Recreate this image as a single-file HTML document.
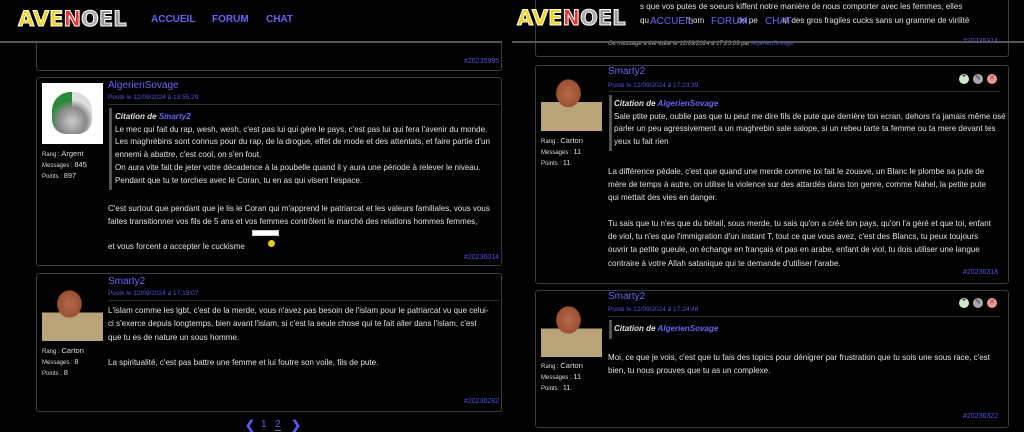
<!DOCTYPE html>
<html><head><meta charset="utf-8"><style>
*{margin:0;padding:0;box-sizing:border-box}
body{width:1024px;height:432px;background:#000;position:relative;overflow:hidden;font-family:"Liberation Sans",sans-serif;color:#e2e2e2}
.a{position:absolute;white-space:nowrap}
.card{position:absolute;border:1px solid #3c3c3c;border-radius:3px}
.t{font-size:8.05px;letter-spacing:0}
.nm{font-size:10px;color:#6466f0}
.dt{font-size:6.5px;color:#5255dd}
.hr{position:absolute;height:1px;background:#2c2c2c}
.qb{position:absolute;width:3px;background:#555}
.id{font-size:7px;color:#5255dd}
.r{font-size:6px;color:#ddd}.r b{font-weight:normal;font-size:7.5px}
.logo{font-weight:900;font-size:21px;letter-spacing:0;-webkit-text-stroke:1px #fff;font-family:"DejaVu Sans",sans-serif}
.nav{font-size:10px;color:#6466f0;font-weight:bold}
.face{position:absolute;background:radial-gradient(ellipse at 45% 35%,#b86a4a 0,#9a5035 25%,transparent 27%),linear-gradient(#000 50%,#b8a478 50%)}
.ic{position:absolute;width:10px;height:10px;border-radius:50%;font-size:7px;text-align:center;line-height:10px;color:#333}
</style></head><body>
<!-- LEFT PANE -->
<div class="card" style="left:36px;top:20px;width:466px;height:51px"></div>
<div class="a id" style="left:464px;top:58px">#20235995</div>
<div class="a" style="left:0;top:0;width:502px;height:42px;background:#000"></div>
<div class="a logo" style="left:18px;top:7px"><span style="color:#f2d21a">AVE</span><span style="color:#e33">N</span><span style="color:#aaa">O</span><span style="color:#999">EL</span></div>
<div class="a nav" style="left:151px;top:14px">ACCUEIL</div>
<div class="a nav" style="left:212px;top:14px">FORUM</div>
<div class="a nav" style="left:266px;top:14px">CHAT</div>
<div class="a" style="left:0;top:41px;width:502px;height:2px;background:#555"></div>

<div class="card" style="left:36px;top:77px;width:466px;height:189px"></div>
<div class="a" style="left:42px;top:83px;width:61px;height:61px;background:#fff"></div>
<div class="a" style="left:52px;top:92px;width:40px;height:42px;border-radius:45% 45% 35% 35%;background:radial-gradient(circle at 50% 70%,#ccc 0,#888 40%,transparent 60%),linear-gradient(90deg,#2a8a3a 50%,#ddd 50%)"></div>
<div class="a r" style="left:42px;top:149px">Rang : <b>Argent</b></div>
<div class="a r" style="left:42px;top:160px">Messages : <b>845</b></div>
<div class="a r" style="left:42px;top:171px">Points : <b>897</b></div>
<div class="a nm" style="left:108px;top:80px">AlgerienSovage</div>
<div class="a dt" style="left:108px;top:94px">Posté le 12/09/2024 à 13:55:29</div>
<div class="hr" style="left:108px;top:104px;width:392px"></div>
<div class="qb" style="left:109px;top:108px;height:82px"></div>
<div class="a t" style="left:115px;top:111px;line-height:12.7px">
<i><b>Citation de <span style="color:#6466f0">Smarty2</span></b></i><br>
Le mec qui fait du rap, wesh, wesh, c'est pas lui qui gère le pays, c'est pas lui qui fera l'avenir du monde.<br>
Les maghrébins sont connus pour du rap, de la drogue, effet de mode et des attentats, et faire partie d'un<br>
ennemi à abattre, c'est cool, on s'en fout.<br>
On aura vite fait de jeter votre décadence à la poubelle quand il y aura une période à relever le niveau.<br>
Pendant que tu te torches avec le Coran, tu en as qui visent l'espace.</div>
<div class="a t" style="left:108px;top:202px;line-height:13.4px">C'est surtout que pendant que je lis le Coran qui m'apprend le patriarcat et les valeurs familiales, vous vous<br>faites transitionner vos fils de 5 ans et vos femmes contrôlent le marché des relations hommes femmes,</div>
<div class="a t" style="left:108px;top:242px">et vous forcent a accepter le cuckisme</div>
<div class="a" style="left:252px;top:230px;width:27px;height:6px;border:1px solid #ccc;background:#fff"></div>
<div class="a" style="left:268px;top:240px;width:7px;height:7px;border-radius:50%;background:#f3c814"></div>
<div class="a id" style="left:464px;top:254px">#20236014</div>

<div class="card" style="left:36px;top:273px;width:466px;height:139px"></div>
<div class="face" style="left:42px;top:284px;width:61px;height:57px"></div>
<div class="a r" style="left:42px;top:346px">Rang : <b>Carton</b></div>
<div class="a r" style="left:42px;top:357px">Messages : <b>8</b></div>
<div class="a r" style="left:42px;top:368px">Points : <b>8</b></div>
<div class="a nm" style="left:108px;top:276px">Smarty2</div>
<div class="a dt" style="left:108px;top:290px">Posté le 12/09/2024 à 17:15:07</div>
<div class="hr" style="left:108px;top:300px;width:392px"></div>
<div class="a t" style="left:108px;top:304px;line-height:13.3px">L'islam comme les lgbt, c'est de la merde, vous n'avez pas besoin de l'islam pour le patriarcat vu que celui-<br>ci s'exerce depuis longtemps, bien avant l'islam, si c'est la seule chose qui te fait aller dans l'islam, c'est<br>que tu es de nature un sous homme.</div>
<div class="a t" style="left:108px;top:358px">La spiritualité, c'est pas battre une femme et lui foutre son voile, fils de pute.</div>
<div class="a id" style="left:464px;top:398px">#20236282</div>
<div class="a" style="left:245px;top:418px;font-size:12px;color:#5a5cf0;font-weight:bold">❮</div>
<div class="a" style="left:261px;top:419px;font-size:10px;color:#5a5cf0">1</div>
<div class="a" style="left:275px;top:419px;font-size:10px;color:#5a5cf0;border-bottom:1px solid #777">2</div>
<div class="a" style="left:291px;top:418px;font-size:12px;color:#5a5cf0;font-weight:bold">❯</div>

<!-- RIGHT PANE -->
<div class="card" style="left:535px;top:-10px;width:474px;height:67px"></div>
<div class="a t" style="left:640px;top:2px">s que vos putes de soeurs kiffent notre manière de nous comporter avec les femmes, elles</div>
<div class="a t" style="left:640px;top:16px">qu&nbsp;&nbsp;&nbsp;&nbsp;&nbsp;&nbsp;&nbsp;&nbsp;&nbsp;&nbsp;&nbsp;&nbsp;&nbsp;&nbsp;&nbsp;&nbsp;&nbsp;'hom&nbsp;&nbsp;&nbsp;&nbsp;&nbsp;&nbsp;&nbsp;&nbsp;&nbsp;&nbsp;&nbsp;&nbsp;&nbsp;&nbsp;&nbsp;on pe&nbsp;&nbsp;&nbsp;&nbsp;&nbsp;&nbsp;&nbsp;&nbsp;&nbsp;&nbsp;&nbsp;nt des gros fragiles cucks sans un gramme de virilité</div>
<div class="a" style="left:608px;top:41px;font-size:6px;font-style:italic;color:#bbb">Ce message a été édité le 12/09/2024 à 17:23:09 par <span style="color:#5255dd">AlgerienSovage</span></div>
<div class="a id" style="left:963px;top:38px">#20236314</div>
<div class="a logo" style="left:517px;top:6px"><span style="color:#f2d21a">AVE</span><span style="color:#e33">N</span><span style="color:#aaa">O</span><span style="color:#999">EL</span></div>
<div class="a nav" style="left:650px;top:16px;font-weight:normal">ACCUEIL</div>
<div class="a nav" style="left:711px;top:16px;font-weight:normal">FORUM</div>
<div class="a nav" style="left:765px;top:16px;font-weight:normal">CHAT</div>
<div class="a" style="left:512px;top:41px;width:512px;height:2px;background:#555"></div>

<div class="card" style="left:535px;top:65px;width:474px;height:219px"></div>
<div class="face" style="left:541px;top:73px;width:61px;height:58px"></div>
<div class="a r" style="left:541px;top:136px">Rang : <b>Carton</b></div>
<div class="a r" style="left:541px;top:147px">Messages : <b>11</b></div>
<div class="a r" style="left:541px;top:158px">Points : <b>11</b></div>
<div class="a nm" style="left:608px;top:66px">Smarty2</div>
<div class="a dt" style="left:608px;top:82px">Posté le 12/09/2024 à 17:23:39</div>
<div class="ic" style="left:959px;top:74px;background:#cfe9cf">❞</div>
<div class="ic" style="left:973px;top:74px;background:#aaa">✎</div>
<div class="ic" style="left:987px;top:74px;background:#e99;color:#a33">✕</div>
<div class="hr" style="left:608px;top:91px;width:392px"></div>
<div class="qb" style="left:609px;top:95px;height:56px"></div>
<div class="a t" style="left:614px;top:98px;line-height:12.7px">
<i><b>Citation de <span style="color:#6466f0">AlgerienSovage</span></b></i><br>
Sale ptite pute, oublie pas que tu peut me dire fils de pute que derrière ton ecran, dehors t'a jamais même osé<br>
parler un peu agressivement a un maghrebin sale salope, si un rebeu tarte ta femme ou ta mere devant tes<br>
yeux tu fait rien</div>
<div class="a t" style="left:608px;top:165px;line-height:13.2px">La différence pédale, c'est que quand une merde comme toi fait le zouave, un Blanc le plombe sa pute de<br>mère de temps à autre, on utilise la violence sur des attardés dans ton genre, comme Nahel, la petite pute<br>qui mettait des vies en danger.</div>
<div class="a t" style="left:608px;top:217px;line-height:13.2px">Tu sais que tu n'es que du bétail, sous merde, tu sais qu'on a créé ton pays, qu'on l'a géré et que toi, enfant<br>de viol, tu n'es que l'immigration d'un instant T, tout ce que vous avez, c'est des Blancs, tu peux toujours<br>ouvrir ta petite gueule, on échange en français et pas en arabe, enfant de viol, tu dois utiliser une langue<br>contraire à votre Allah satanique qui te demande d'utiliser l'arabe.</div>
<div class="a id" style="left:963px;top:269px">#20236318</div>

<div class="card" style="left:535px;top:290px;width:474px;height:138px"></div>
<div class="face" style="left:541px;top:300px;width:61px;height:57px"></div>
<div class="a r" style="left:541px;top:361px">Rang : <b>Carton</b></div>
<div class="a r" style="left:541px;top:372px">Messages : <b>11</b></div>
<div class="a r" style="left:541px;top:383px">Points : <b>11</b></div>
<div class="a nm" style="left:608px;top:291px">Smarty2</div>
<div class="a dt" style="left:608px;top:306px">Posté le 12/09/2024 à 17:24:48</div>
<div class="ic" style="left:959px;top:298px;background:#cfe9cf">❞</div>
<div class="ic" style="left:973px;top:298px;background:#aaa">✎</div>
<div class="ic" style="left:987px;top:298px;background:#e99;color:#a33">✕</div>
<div class="hr" style="left:608px;top:316px;width:392px"></div>
<div class="qb" style="left:609px;top:320px;height:19px"></div>
<div class="a t" style="left:614px;top:324px"><i><b>Citation de <span style="color:#6466f0">AlgerienSovage</span></b></i></div>
<div class="a t" style="left:608px;top:351px;line-height:13.4px">Moi, ce que je vois, c'est que tu fais des topics pour dénigrer par frustration que tu sois une sous race, c'est<br>bien, tu nous prouves que tu as un complexe.</div>
<div class="a id" style="left:963px;top:413px">#20236322</div>
</body></html>
